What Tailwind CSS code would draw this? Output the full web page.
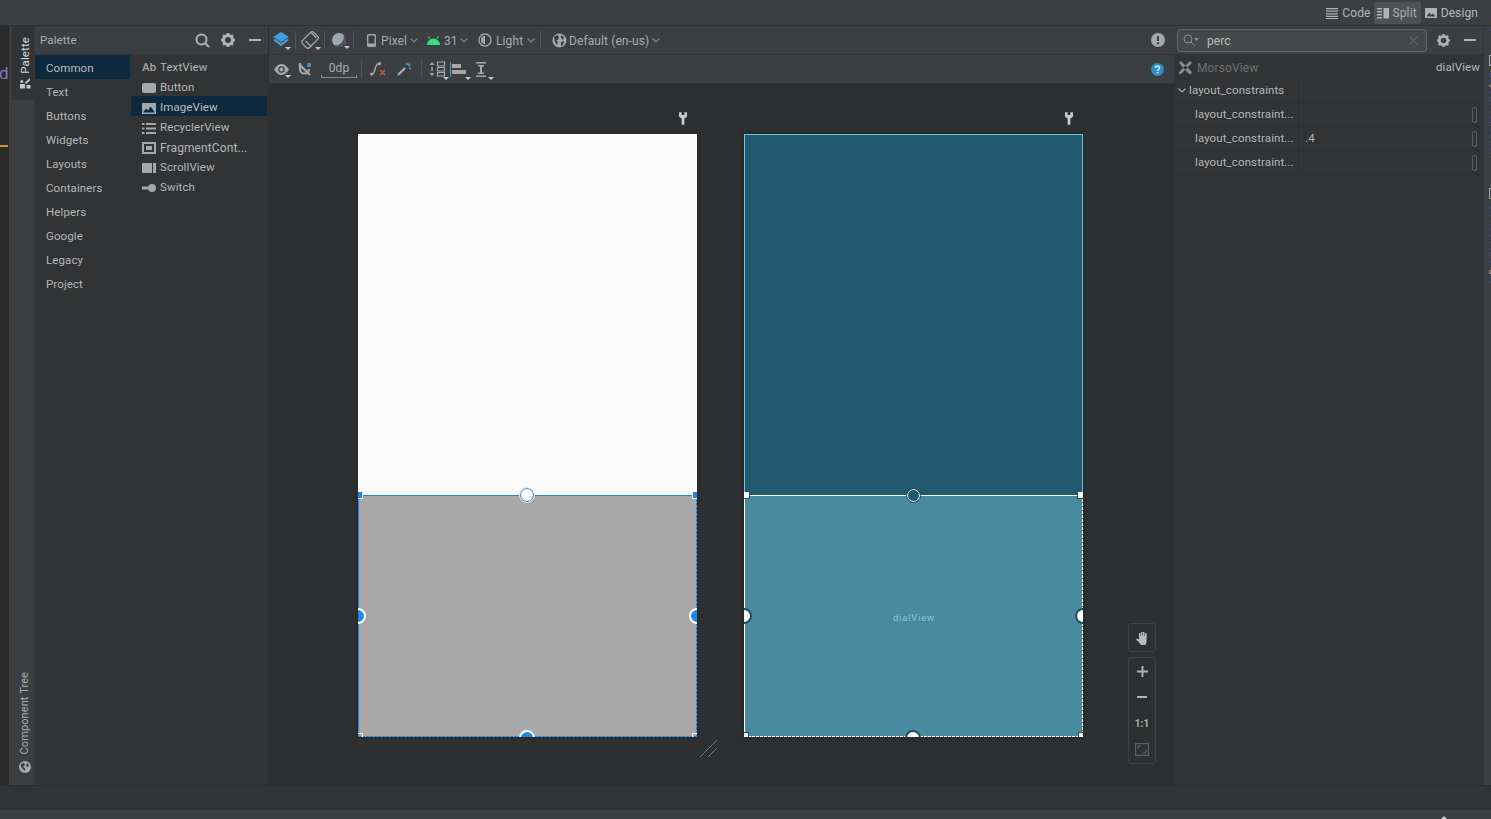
<!DOCTYPE html>
<html lang="en">
<head>
<meta charset="UTF-8">
<title>Layout editor</title>
<script src="https://cdn.jsdelivr.net/npm/@tailwindcss/browser@4"></script>
</head>
<body class="bg-[#3c3f41] overflow-hidden">
<div class="w-[1491px] h-[819px] flex flex-col font-['Roboto','Noto_Sans',sans-serif] text-[11.5px] tracking-[0.1px] text-[#b4b7b9] overflow-hidden">

  <!-- top bar -->
  <div class="h-[26px] shrink-0 bg-[#3c3f41] border-b border-[#2f3132] flex items-center justify-end pr-[13px] text-[12px]">
    <div class="flex items-center gap-[4px] px-[3px]">
      <svg width="12" height="12" viewBox="0 0 12 12" fill="#b0b3b5"><path d="M0 1h12v1.200H0zM0 3.600h12v1.200H0zM0 6.200h12v1.200H0zM0 8.800h12V10H0zM0 11h12v1H0z"/></svg>
      <span>Code</span>
    </div>
    <div class="h-[22px] bg-[#4e5254] rounded-[2px] flex items-center gap-[4px] pl-[3px] pr-[4px] text-[#a9acae]">
      <svg width="12" height="12" viewBox="0 0 12 12" fill="#b0b3b5"><path d="M0 1h5v1.500H0zM0 4h5v1.500H0zM0 7h5v1.500H0zM0 10h5v1.500H0zM6.500 1H12v10.500H6.500z"/></svg>
      <span>Split</span>
    </div>
    <div class="flex items-center gap-[4px] pl-[4px]">
      <svg width="12" height="12" viewBox="0 0 12 12"><path fill="#b0b3b5" d="M0 1h12v10H0z"/><path fill="#3c3f41" d="M1.500 9.500l2.800-4 2 2.500 1.500-1.500 2.700 3z"/></svg>
      <span>Design</span>
    </div>
  </div>

  <!-- middle -->
  <div class="flex h-[759px] shrink-0">
    <!-- left gutter -->
    <div class="w-[9px] shrink-0 bg-[#2b2b2b] relative overflow-hidden border-r border-[#262626]">
      <span class="absolute left-[-1px] top-[36px] text-[17px] leading-[22px] text-[#8a76c4]">d</span>
      <div class="absolute left-0 top-[119px] w-[9px] h-[2px] bg-[#c49a2c]"></div>
    </div>
    <!-- tool strip -->
    <div class="w-[26px] shrink-0 bg-[#3c3f41] flex flex-col justify-between items-end border-r border-[#35383a]">
      <div class="w-[22px] h-[74px] bg-[#313335] flex flex-col items-center pl-[4px] pt-[11px] text-[#d5d7d8] gap-[3px]">
        <span class="[writing-mode:vertical-rl] rotate-180 leading-[16px] whitespace-nowrap">Palette</span>
        <svg class="shrink-0" width="12" height="12" viewBox="0 0 12 12" fill="#c6c8c9"><path d="M1 7h5v4.500H1z"/><path d="M6 5.500L11 1v2.500L7 7zM7.500 8h4v3.500h-4z"/><circle cx="2.800" cy="4.500" r="1.500"/></svg>
      </div>
      <div class="w-[22px] h-[113px] flex flex-col items-center justify-end pl-[4px] pb-[12px] gap-[7px] text-[#a9acae]">
        <span class="[writing-mode:vertical-rl] rotate-180 leading-[16px] text-[11px] whitespace-nowrap">Component Tree</span>
        <svg class="shrink-0" width="12" height="12" viewBox="0 0 12 12"><circle cx="6" cy="6" r="6" fill="#a5a8aa"/><path fill="#3c3f41" d="M2 3l3-1 1 2-2 2 2 1v3L4 8 2 6zM8 2l2 2-1 2-2-1z"/></svg>
      </div>
    </div>

    <!-- palette panel -->
    <div class="w-[233px] shrink-0 flex flex-col bg-[#313335]">
      <div class="h-[29px] shrink-0 bg-[#3c3f41] border-b border-[#323436] flex items-center pl-[5px] pr-[7px] text-[#a9acae]">
        <span class="flex-1 pt-[2px]">Palette</span>
        <svg class="mr-[11px]" width="15" height="15" viewBox="0 0 15 15" fill="none" stroke="#b0b3b5" stroke-width="2"><circle cx="6.500" cy="6.500" r="5"/><path d="M10 10l4 4"/></svg>
        <svg class="mr-[14px]" width="14" height="14" viewBox="0 0 14 14"><circle cx="7" cy="7" r="4.500" fill="none" stroke="#b0b3b5" stroke-width="3"/><path stroke="#b0b3b5" stroke-width="2.400" d="M7 0v3M7 11v3M0 7h3M11 7h3M2 2l2 2M10 10l2 2M2 12l2-2M10 4l2-2"/></svg>
        <div class="w-[12px] h-[2px] bg-[#b0b3b5]"></div>
      </div>
      <div class="flex flex-1">
        <div class="w-[95px] shrink-0 flex flex-col">
          <div class="h-[24px] pl-[11px] pt-[3px] flex items-center bg-[#0d293e] text-[#bbbdbf]">Common</div>
          <div class="h-[24px] pl-[11px] pt-[3px] flex items-center">Text</div>
          <div class="h-[24px] pl-[11px] pt-[3px] flex items-center">Buttons</div>
          <div class="h-[24px] pl-[11px] pt-[3px] flex items-center">Widgets</div>
          <div class="h-[24px] pl-[11px] pt-[3px] flex items-center">Layouts</div>
          <div class="h-[24px] pl-[11px] pt-[3px] flex items-center">Containers</div>
          <div class="h-[24px] pl-[11px] pt-[3px] flex items-center">Helpers</div>
          <div class="h-[24px] pl-[11px] pt-[3px] flex items-center">Google</div>
          <div class="h-[24px] pl-[11px] pt-[3px] flex items-center">Legacy</div>
          <div class="h-[24px] pl-[11px] pt-[3px] flex items-center">Project</div>
        </div>
        <div class="w-[136px] ml-[1px] flex flex-col pt-[1px]">
          <div class="h-[20px] pl-[11px] pt-[4px] flex items-center"><span class="w-[18px] text-[#9a9da0] font-semibold">Ab</span>TextView</div>
          <div class="h-[20px] pl-[11px] pt-[4px] flex items-center"><span class="w-[14px] h-[10px] mr-[4px] rounded-[2px] bg-[#a5a8aa]"></span>Button</div>
          <div class="h-[20px] pl-[11px] pt-[4px] flex items-center bg-[#0d293e] text-[#bbbdbf]"><svg class="mr-[4px]" width="14" height="11" viewBox="0 0 14 11"><path fill="#a5a8aa" d="M0 0h14v11H0z"/><path fill="#0d293e" d="M1 9.500l3-4 2 2 2.500-4 4.500 6z"/></svg>ImageView</div>
          <div class="h-[20px] pl-[11px] pt-[4px] flex items-center"><svg class="mr-[4px]" width="14" height="11" viewBox="0 0 14 11" fill="#a5a8aa"><path d="M0 0h2.500v2H0zM4 0h10v2H4zM0 4.500h2.500v2H0zM4 4.500h10v2H4zM0 9h2.500v2H0zM4 9h10v2H4z"/></svg>RecyclerView</div>
          <div class="h-[20px] pl-[11px] pt-[4px] flex items-center"><svg class="mr-[4px]" width="14" height="12" viewBox="0 0 14 12"><path fill="none" stroke="#a5a8aa" stroke-width="2" d="M1 1h12v10H1z"/><path fill="#a5a8aa" d="M4 4h6v4H4z"/></svg><span class="whitespace-nowrap text-[12px]">FragmentCont...</span></div>
          <div class="h-[20px] pl-[11px] pt-[4px] flex items-center"><svg class="mr-[4px]" width="14" height="10" viewBox="0 0 14 10"><path fill="#a5a8aa" d="M0 0h10v10H0zM11 0h3v10h-3z"/></svg>ScrollView</div>
          <div class="h-[20px] pl-[11px] pt-[4px] flex items-center"><svg class="mr-[4px]" width="14" height="8" viewBox="0 0 14 8" fill="#a5a8aa"><path d="M0 2.500h6v3H0z"/><circle cx="10" cy="4" r="4"/></svg>Switch</div>
        </div>
      </div>
    </div>

    <!-- design area -->
    <div class="w-[906px] shrink-0 flex flex-col border-l border-[#2b2d2f]">
      <div class="h-[29px] shrink-0 bg-[#3c3f41] border-b border-[#323436] flex items-center text-[#a9acae] text-[12px]">
        <div class="w-[24px] flex justify-center relative">
          <svg width="18" height="18" viewBox="0 0 18 18"><path fill="#3f9fd8" d="M9 1l8 5-8 5-8-5z"/><path fill="#3f9fd8" d="M1 9l2-1 6 4 6-4 2 1-8 6z"/></svg>
          <span class="absolute right-[2px] bottom-[-1px] border-x-[3px] border-x-transparent border-t-[3px] border-t-[#c8c9ca]"></span>
        </div>
        <div class="w-px h-[18px] ml-[2px] bg-[#515456]"></div>
        <div class="w-[28px] flex justify-center relative">
          <svg width="18" height="18" viewBox="0 0 18 18" fill="none" stroke="#a5a8aa" stroke-width="1.200"><rect x="4" y="1" width="10" height="16" rx="2" transform="rotate(45 9 9)"/><path d="M5 10.500l5.500 5.500M10.500 2l5.500 5.500" transform="translate(-.5 -.5)"/></svg>
          <span class="absolute right-[3px] bottom-[-1px] border-x-[3px] border-x-transparent border-t-[3px] border-t-[#c8c9ca]"></span>
        </div>
        <div class="w-px h-[18px] bg-[#515456]"></div>
        <div class="w-[28px] flex justify-center relative">
          <svg width="16" height="16" viewBox="0 0 16 16"><circle cx="8" cy="8" r="7" fill="#9da7ae"/><path fill="#4f5356" d="M15 8a7 7 0 0 1-12 4.900A8 8 0 0 0 12.300 2.500 7 7 0 0 1 15 8z"/></svg>
          <span class="absolute right-[3px] bottom-[-1px] border-x-[3px] border-x-transparent border-t-[3px] border-t-[#c8c9ca]"></span>
        </div>
        <div class="w-px h-[18px] bg-[#515456]"></div>
        <svg class="ml-[13px]" width="9" height="13" viewBox="0 0 9 13"><rect x=".7" y=".7" width="7.600" height="11.600" rx="1" fill="none" stroke="#a5a8aa" stroke-width="1.400"/><path fill="#a5a8aa" d="M1 9.500h7v3H1z"/></svg>
        <span class="ml-[5px] w-[26px] pt-[1px]">Pixel</span>
        <svg class="ml-[3px]" width="8" height="5" viewBox="0 0 8 5" fill="none" stroke="#84888a" stroke-width="1.200"><path d="M.5.500L4 4 7.500.5"/></svg>
        <svg class="ml-[9px]" width="13" height="9" viewBox="0 0 13 9"><path fill="#3ddc84" d="M0 9a6.500 6.500 0 0 1 13 0z"/><path stroke="#3ddc84" d="M3 3L1.500 0M10 3l1.500-3"/></svg>
        <span class="ml-[4px] w-[13px] pt-[1px]">31</span>
        <svg class="ml-[3px]" width="8" height="5" viewBox="0 0 8 5" fill="none" stroke="#84888a" stroke-width="1.200"><path d="M.5.500L4 4 7.500.5"/></svg>
        <svg class="ml-[10px]" width="14" height="14" viewBox="0 0 14 14"><circle cx="7" cy="7" r="6" fill="none" stroke="#a5a8aa" stroke-width="1.300"/><path fill="#a5a8aa" d="M7 3a4 4 0 0 0 0 8z"/></svg>
        <span class="ml-[4px] w-[28px] pt-[1px]">Light</span>
        <svg class="ml-[3px]" width="8" height="5" viewBox="0 0 8 5" fill="none" stroke="#84888a" stroke-width="1.200"><path d="M.5.500L4 4 7.500.5"/></svg>
        <div class="w-px h-[18px] bg-[#515456] ml-[5px]"></div>
        <svg class="ml-[11px]" width="15" height="15" viewBox="0 0 15 15"><circle cx="7.500" cy="7.500" r="7" fill="#a5a8aa"/><path fill="#3c3f41" d="M2 4l3-2 2 2-1 3-2 0 2 2-1 3-2-3zM9 2l3 2-1 3-2-2zM9 9l3-1-1 4-2 1z"/></svg>
        <span class="ml-[2px] w-[80px] whitespace-nowrap pt-[1px]">Default (en-us)</span>
        <svg class="ml-[3px]" width="8" height="5" viewBox="0 0 8 5" fill="none" stroke="#84888a" stroke-width="1.200"><path d="M.5.500L4 4 7.500.5"/></svg>
        <svg class="ml-auto mr-[9px]" width="14" height="14" viewBox="0 0 14 14"><circle cx="7" cy="7" r="7" fill="#a5a8aa"/><path fill="#3c3f41" d="M6 3h2v5H6zM6 9.300h2v2H6z"/></svg>
      </div>
      <div class="h-[29px] shrink-0 bg-[#3c3f41] border-b border-[#323436] flex items-center text-[#a9acae] text-[12px]">
        <div class="w-[24px] flex justify-center relative">
          <svg width="15" height="11" viewBox="0 0 15 11"><path fill="#a5a8aa" d="M0 5.500C2.500 1.500 5 0 7.500 0S12.500 1.500 15 5.500C12.500 9.500 10 11 7.500 11S2.500 9.500 0 5.500z"/><circle cx="7.500" cy="5.500" r="3.200" fill="#3c3f41"/><circle cx="7.500" cy="5.500" r="2" fill="#a5a8aa"/></svg>
          <span class="absolute right-[2px] bottom-[-3px] border-x-[3px] border-x-transparent border-t-[3px] border-t-[#c8c9ca]"></span>
        </div>
        <svg class="ml-[5px]" width="14" height="14" viewBox="0 0 14 14"><path fill="none" stroke="#a5a8aa" stroke-width="2.200" d="M2 1v6a4.500 4.500 0 0 0 9 0M1 2l11 11"/><path fill="#3a8fc8" d="M9 1h4v4H9z"/></svg>
        <div class="ml-[9px] w-[36px] h-[18px] relative flex justify-center leading-[17px]">0dp<div class="absolute left-0 right-0 bottom-0 h-[3px] border-x border-b border-[#85888a]"></div></div>
        <div class="w-px h-[18px] bg-[#515456] ml-[4px]"></div>
        <svg class="ml-[8px]" width="16" height="14" viewBox="0 0 16 14"><path fill="none" stroke="#a5a8aa" stroke-width="1.400" d="M1.500 12.500C6 12.500 4 1.500 9 1.500"/><circle cx="1.500" cy="12" r="1.500" fill="#a5a8aa"/><circle cx="9.500" cy="1.800" r="1.700" fill="#a5a8aa"/><path stroke="#c75450" stroke-width="1.500" d="M10 8l5 5M15 8l-5 5"/></svg>
        <svg class="ml-[11px]" width="15" height="14" viewBox="0 0 15 14"><path stroke="#a5a8aa" stroke-width="2.400" d="M1 13l7-7"/><path stroke="#3a8fc8" stroke-width="1.200" d="M11 0v3M14 4h-3M13.500 1.500l-2 2"/><path stroke="#a5a8aa" d="M9 1l1 2M14 7l-2-1"/></svg>
        <div class="w-px h-[18px] bg-[#515456] ml-[9px]"></div>
        <div class="ml-[7px] w-[17px] relative">
          <svg width="17" height="16" viewBox="0 0 17 16"><path fill="#a5a8aa" d="M3 1l2.500 3h-5zM3 15L.5 12h5zM2.300 6h1.400v4H2.300z"/><path fill="none" stroke="#a5a8aa" stroke-width="1.200" d="M8.500 1h7v4h-7zM8.500 6.500h7v3.500h-7zM8.500 11.500h7V15h-7z"/></svg>
          <span class="absolute right-[-3px] bottom-[-3px] border-x-[3px] border-x-transparent border-t-[3px] border-t-[#c8c9ca]"></span>
        </div>
        <div class="ml-[4px] w-[20px] relative">
          <svg width="16" height="15" viewBox="0 0 16 15"><path fill="#3f9fd8" d="M0 0h1v15H0z"/><path fill="#a5a8aa" d="M2 2h9v4H2zM2 8h14v4H2z"/></svg>
          <span class="absolute right-[-1px] bottom-[-3px] border-x-[3px] border-x-transparent border-t-[3px] border-t-[#c8c9ca]"></span>
        </div>
        <div class="ml-[5px] w-[18px] relative">
          <svg width="12" height="15" viewBox="0 0 12 15"><path fill="#a5a8aa" d="M1 0h10v1.500H1zM1 13.500h10V15H1zM5 3h2v9H5zM3 3h6v1.500H3zM3 10.500h6V12H3z"/></svg>
          <span class="absolute right-[-1px] bottom-[-3px] border-x-[3px] border-x-transparent border-t-[3px] border-t-[#c8c9ca]"></span>
        </div>
        <svg class="ml-auto mr-[10px]" width="13" height="13" viewBox="0 0 13 13"><circle cx="6.500" cy="6.500" r="6.500" fill="#2d8fc9"/><path fill="none" stroke="#e6eef3" stroke-width="1.500" d="M4.500 5c0-2.600 4-2.600 4 0 0 1.500-2 1.500-2 3"/><path fill="#e6eef3" d="M5.700 9h1.600v1.600H5.700z"/></svg>
      </div>

      <!-- canvas -->
      <div class="flex-1 bg-[#2d2f31] relative flex items-start pl-[89px] pt-[50px] gap-[47px] overflow-hidden">
        <svg class="absolute left-[410px] top-[28px]" width="8" height="13" viewBox="0 0 9 14" fill="#c9cbcc"><path d="M0 0h3v3h3V0h3v5L6 7v7H3V7L0 5z"/></svg>
        <svg class="absolute left-[796px] top-[28px]" width="8" height="13" viewBox="0 0 9 14" fill="#c9cbcc"><path d="M0 0h3v3h3V0h3v5L6 7v7H3V7L0 5z"/></svg>

        <!-- design surface -->
        <div class="w-[339px] h-[603px] shrink-0 flex flex-col relative shadow-[0_0_3px_#1f2021]">
          <div class="h-[361px] bg-[#fafafa]"></div>
          <div class="h-[242px] bg-[#a8a8a8] border-t border-l border-[#1e88e8] border-r-0 border-b-0"></div>
          <div class="absolute right-0 top-[361px] w-px h-[242px] bg-[repeating-linear-gradient(to_bottom,#1e88e8_0_3px,#a8a8a8_3px_4px)]"></div>
          <div class="absolute left-0 bottom-0 w-full h-px bg-[repeating-linear-gradient(to_right,#1e88e8_0_3px,#a8a8a8_3px_4px)]"></div>
          <div class="absolute left-0 top-[358px] w-[5px] h-[7px] bg-[#1e88e8] border-r border-b border-white"></div>
          <div class="absolute right-0 top-[358px] w-[5px] h-[7px] bg-[#1e88e8] border-l border-b border-white"></div>
          <div class="absolute left-0 bottom-0 w-[5px] h-[4px] border-r border-t border-white"></div>
          <div class="absolute right-0 bottom-0 w-[5px] h-[4px] border-l border-t border-white"></div>
          <div class="absolute left-[162px] top-[354px] w-[14px] h-[14px] rounded-full bg-white border border-[#1e88e8] outline-1 outline-[#e8e8e8]"></div>
          <div class="absolute left-0 top-[474px] h-[16px] w-[8px] overflow-hidden"><div class="w-[16px] h-[16px] -ml-[8px] rounded-full bg-[#1e88e8] border-2 border-white"></div></div>
          <div class="absolute right-0 top-[474px] h-[16px] w-[8px] overflow-hidden"><div class="w-[16px] h-[16px] rounded-full bg-[#1e88e8] border-2 border-white"></div></div>
          <div class="absolute left-[161px] bottom-0 h-[7px] w-[16px] overflow-hidden"><div class="w-[16px] h-[16px] rounded-full bg-[#1e88e8] border-2 border-white"></div></div>
        </div>

        <!-- blueprint -->
        <div class="w-[339px] h-[603px] shrink-0 flex flex-col relative shadow-[0_0_3px_#1f2021]">
          <div class="h-[361px] bg-[#215a6e] border-t border-x border-[#6fc6de]"></div>
          <div class="h-[242px] bg-[#4a8a9f] border-t border-l border-white flex items-center justify-center pt-[3px] text-[9.500px] tracking-[0.8px] text-[#8fc6d8]">dialView</div>
          <div class="absolute right-0 top-[361px] w-px h-[242px] bg-[repeating-linear-gradient(to_bottom,#ffffff_0_3px,#4a8a9f_3px_4px)]"></div>
          <div class="absolute left-0 bottom-0 w-full h-px bg-[repeating-linear-gradient(to_right,#ffffff_0_3px,#4a8a9f_3px_4px)]"></div>
          <div class="absolute left-0 top-[358px] w-[6px] h-[7px] bg-white border-r border-b border-[#1d4f61]"></div>
          <div class="absolute right-0 top-[358px] w-[6px] h-[7px] bg-white border-l border-b border-[#1d4f61]"></div>
          <div class="absolute left-0 bottom-0 w-[5px] h-[5px] bg-white border-r border-t border-[#1d4f61]"></div>
          <div class="absolute right-0 bottom-0 w-[5px] h-[5px] bg-white border-l border-t border-[#1d4f61]"></div>
          <div class="absolute left-[162px] top-[354px] w-[13px] h-[13px] ml-[1px] mt-[1px] rounded-full bg-[#215a6e] border border-white outline-1 outline-[#1d4f61]"></div>
          <div class="absolute left-0 top-[474px] h-[16px] w-[8px] overflow-hidden"><div class="w-[16px] h-[16px] -ml-[8px] rounded-full bg-white border-2 border-[#1d4f61]"></div></div>
          <div class="absolute right-0 top-[474px] h-[16px] w-[8px] overflow-hidden"><div class="w-[16px] h-[16px] rounded-full bg-white border-2 border-[#1d4f61]"></div></div>
          <div class="absolute left-[161px] bottom-0 h-[7px] w-[16px] overflow-hidden"><div class="w-[16px] h-[16px] rounded-full bg-white border-2 border-[#1d4f61]"></div></div>
        </div>

        <!-- resize grip -->
        <svg class="absolute left-[431px] top-[656px]" width="18" height="18" viewBox="0 0 18 18" stroke="#777a7c"><path d="M0 17L17 0M8 17l9-9"/></svg>

        <!-- zoom controls -->
        <div class="absolute left-[859px] top-[539px] flex flex-col gap-[5px]">
          <div class="w-[28px] h-[29px] rounded-[3px] border border-[#3f4244] flex items-center justify-center">
            <svg width="14" height="14" viewBox="0 0 14 14" fill="#b8babb"><path d="M4 2h1.500v5H4zM6 1h1.500v6H6zM8 1h1.500v6H8zM10 2h1.500v5H10z"/><path d="M4 5h7.500v6L10.500 14H6L4.500 12 1 8.500 2 7.500 4 8.500z"/></svg>
          </div>
          <div class="w-[28px] h-[107px] rounded-[3px] border border-[#3f4244] flex flex-col items-center text-[#b0b3b5]">
            <div class="h-[26px] flex items-center justify-center"><svg width="11" height="11" viewBox="0 0 11 11" fill="#b0b3b5"><path d="M4.500 0h2v11h-2zM0 4.500h11v2H0z"/></svg></div>
            <div class="h-[26px] flex items-center justify-center"><div class="w-[10px] h-[2px] bg-[#b0b3b5]"></div></div>
            <div class="h-[26px] flex items-center justify-center text-[10px] font-bold">1:1</div>
            <div class="h-[26px] flex items-center justify-center">
              <svg width="14" height="13" viewBox="0 0 14 13" fill="none"><path stroke="#5e6163" stroke-width="1.200" d="M.6.600h12.800v11.800H.6z"/><path stroke="#5e6163" d="M3 6V3h3M11 7v3H8"/></svg>
            </div>
          </div>
        </div>
      </div>
    </div>

    <!-- attributes panel -->
    <div class="w-[309px] shrink-0 flex flex-col bg-[#313335]">
      <div class="h-[29px] shrink-0 bg-[#3c3f41] border-b border-[#323436] flex items-center pl-[3px] pr-[7px]">
        <div class="w-[250px] h-[23px] rounded-[3px] bg-[#45494a] border border-[#646464] flex items-center pl-[5px] pr-[8px] text-[#bbbdbf] text-[12px]">
          <svg width="16" height="13" viewBox="0 0 16 13" fill="none" stroke="#8b8e90"><circle cx="5" cy="5" r="4"/><path d="M8 8l4 4"/><path fill="#8b8e90" stroke="none" d="M11 4h5l-2.500 3z"/></svg>
          <span class="ml-[8px] flex-1 pt-[2px] leading-none">perc</span>
          <svg width="9" height="9" viewBox="0 0 9 9" stroke="#6e7173"><path d="M.5.500l8 8M8.500.5l-8 8"/></svg>
        </div>
        <svg class="ml-[10px]" width="13" height="13" viewBox="0 0 14 14"><circle cx="7" cy="7" r="4.500" fill="none" stroke="#b0b3b5" stroke-width="3"/><path stroke="#b0b3b5" stroke-width="2.400" d="M7 0v3M7 11v3M0 7h3M11 7h3M2 2l2 2M10 10l2 2M2 12l2-2M10 4l2-2"/></svg>
        <div class="ml-auto w-[12px] h-[2px] bg-[#b0b3b5]"></div>
      </div>
      <div class="h-[24px] shrink-0 flex items-center pl-[4px] pr-[3px]">
        <svg width="15" height="15" viewBox="0 0 15 15" fill="#8b8e90"><path d="M1 3l2-2 11 11-1 2-2 0zM14 3l-2-2L1 12l0 2 2 0z"/></svg>
        <span class="ml-[4px] flex-1 pt-[2px] text-[#6e7274] text-[12px]">MorsoView</span>
        <span class="pt-[2px]">dialView</span>
      </div>
      <div class="h-[24px] shrink-0 flex items-center border-b border-[#2b2d2f]">
        <div class="w-[125px] h-full flex items-center pl-[4px] border-r border-[#2b2d2f]">
          <svg width="8" height="5" viewBox="0 0 8 5" fill="none" stroke="#a5a8aa" stroke-width="1.200"><path d="M.5.500L4 4 7.500.5"/></svg>
          <span class="ml-[3px] whitespace-nowrap">layout_constraints</span>
        </div>
      </div>
      <div class="h-[24px] shrink-0 flex items-center border-b border-[#2b2d2f]">
        <div class="w-[125px] h-full flex items-center pl-[21px] border-r border-[#2b2d2f] whitespace-nowrap">layout_constraint...</div>
        <div class="ml-auto mr-[6px] w-[5px] h-[16px] rounded-[2px] border border-[#5e6163]"></div>
      </div>
      <div class="h-[24px] shrink-0 flex items-center border-b border-[#2b2d2f]">
        <div class="w-[125px] h-full flex items-center pl-[21px] border-r border-[#2b2d2f] whitespace-nowrap">layout_constraint...</div>
        <span class="ml-[6px]">.4</span>
        <div class="ml-auto mr-[6px] w-[5px] h-[16px] rounded-[2px] border border-[#5e6163]"></div>
      </div>
      <div class="h-[24px] shrink-0 flex items-center border-b border-[#2b2d2f]">
        <div class="w-[125px] h-full flex items-center pl-[21px] border-r border-[#2b2d2f] whitespace-nowrap">layout_constraint...</div>
        <div class="ml-auto mr-[6px] w-[5px] h-[16px] rounded-[2px] border border-[#5e6163]"></div>
      </div>
    </div>

    <!-- right tool strip, names run off the window edge -->
    <div class="w-[8px] shrink-0 bg-[#3c3f41] border-l border-[#323436] relative overflow-hidden text-[#a9acae]">
      <span class="absolute left-[4px] top-[-26px] [writing-mode:vertical-rl] leading-[12px] text-[11px] whitespace-nowrap">Gradle</span>
      <div class="absolute left-[5px] top-[29px] w-[8px] h-[11px] border border-[#a5a8aa]"></div>
      <span class="absolute left-[4px] top-[46px] [writing-mode:vertical-rl] leading-[12px] text-[11px] whitespace-nowrap">Layout Validation</span>
      <div class="absolute left-[5px] top-[162px] w-[8px] h-[11px] border border-[#a5a8aa]"></div>
      <span class="absolute left-[4px] top-[179px] [writing-mode:vertical-rl] leading-[12px] text-[11px] whitespace-nowrap">Device Manager</span>
    </div>
  </div>

  <!-- bottom bars -->
  <div class="h-[25px] shrink-0 bg-[#313335] border-t border-[#2b2d2f]"></div>
  <div class="flex-1 bg-[#3c3f41] relative">
    <span class="absolute left-[1441px] top-[6px] border-x-[3px] border-x-transparent border-b-[3px] border-b-[#c8c9ca]"></span>
  </div>
</div>
</body>
</html>
